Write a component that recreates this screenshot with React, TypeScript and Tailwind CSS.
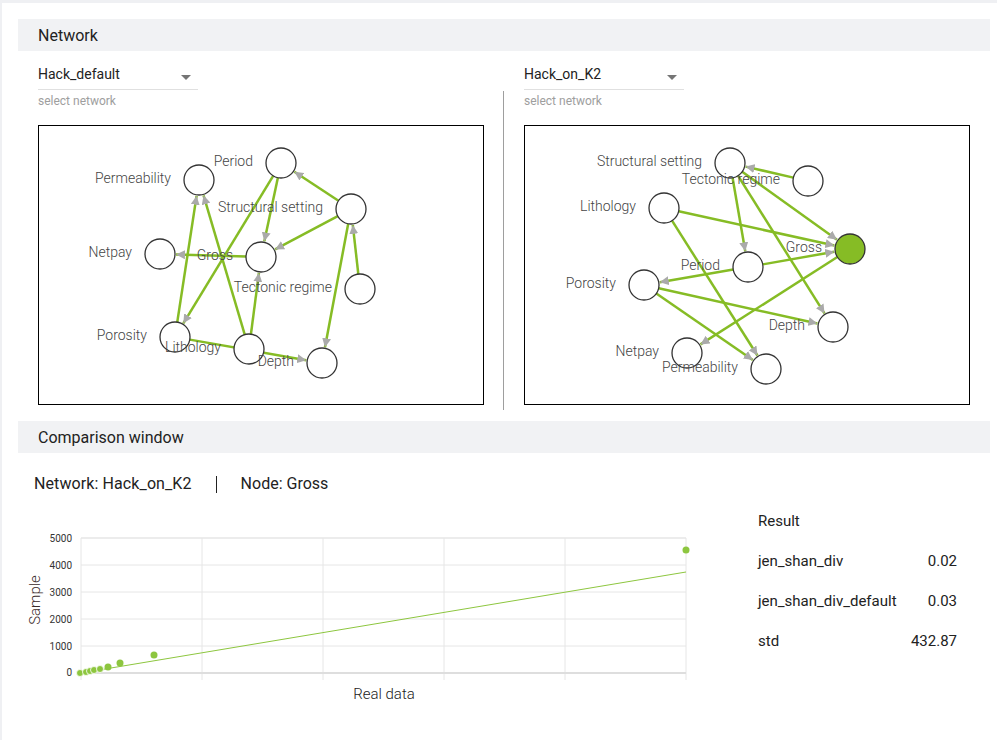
import React from 'react';

type Node = { id: string; x: number; y: number; fill?: string };
type Edge = [string, string];

const leftNodes: Node[] = [
  { id: 'Period', x: 243, y: 37 },
  { id: 'Permeability', x: 161, y: 54 },
  { id: 'Structural setting', x: 313, y: 83 },
  { id: 'Netpay', x: 122, y: 128 },
  { id: 'Gross', x: 223, y: 131 },
  { id: 'Tectonic regime', x: 322, y: 163 },
  { id: 'Porosity', x: 137, y: 211 },
  { id: 'Lithology', x: 211, y: 223 },
  { id: 'Depth', x: 284, y: 237 },
];

const leftEdges: Edge[] = [
  ['Period', 'Gross'],
  ['Period', 'Porosity'],
  ['Structural setting', 'Period'],
  ['Structural setting', 'Gross'],
  ['Structural setting', 'Depth'],
  ['Tectonic regime', 'Structural setting'],
  ['Gross', 'Netpay'],
  ['Porosity', 'Permeability'],
  ['Lithology', 'Permeability'],
  ['Lithology', 'Gross'],
  ['Porosity', 'Depth'],
];

const rightNodes: Node[] = [
  { id: 'Structural setting', x: 206, y: 37 },
  { id: 'Tectonic regime', x: 284, y: 55 },
  { id: 'Lithology', x: 140, y: 82 },
  { id: 'Gross', x: 326, y: 123, fill: '#86bc25' },
  { id: 'Period', x: 224, y: 141 },
  { id: 'Porosity', x: 120, y: 159 },
  { id: 'Depth', x: 309, y: 201 },
  { id: 'Netpay', x: 163, y: 227 },
  { id: 'Permeability', x: 242, y: 243 },
];

const rightEdges: Edge[] = [
  ['Tectonic regime', 'Structural setting'],
  ['Structural setting', 'Period'],
  ['Structural setting', 'Depth'],
  ['Structural setting', 'Gross'],
  ['Lithology', 'Gross'],
  ['Lithology', 'Permeability'],
  ['Period', 'Gross'],
  ['Period', 'Porosity'],
  ['Porosity', 'Depth'],
  ['Porosity', 'Permeability'],
  ['Gross', 'Netpay'],
];

const R = 15;

const Graph = ({ nodes, edges, mid }: { nodes: Node[]; edges: Edge[]; mid: string }) => {
  const byId = Object.fromEntries(nodes.map((n) => [n.id, n]));
  return (
    <svg width="444" height="278" viewBox="1 0 444 278" className="block">
      <defs>
        <marker id={mid} viewBox="0 0 10 10" refX="10" refY="5" markerWidth="9" markerHeight="9" markerUnits="userSpaceOnUse" orient="auto">
          <path d="M0,0 L10,5 L0,10 z" fill="#aaa" />
        </marker>
      </defs>
      {edges.map(([s, t], i) => {
        const a = byId[s];
        const b = byId[t];
        const dx = b.x - a.x;
        const dy = b.y - a.y;
        const d = Math.hypot(dx, dy);
        const ux = dx / d;
        const uy = dy / d;
        return (
          <line
            key={i}
            x1={a.x + ux * R}
            y1={a.y + uy * R}
            x2={b.x - ux * (R + 1)}
            y2={b.y - uy * (R + 1)}
            stroke="#86bc25"
            strokeWidth="2.5"
            markerEnd={`url(#${mid})`}
          />
        );
      })}
      {nodes.map((n) => (
        <g key={n.id}>
          <circle cx={n.x} cy={n.y} r={R} fill={n.fill ?? '#fff'} stroke="#333" strokeWidth="1.3" />
          <text x={n.x - 28} y={n.y - 2} textAnchor="end" dominantBaseline="central" fontSize="14" fontWeight="300" fill="#444" fontFamily="Roboto, sans-serif">
            {n.id}
          </text>
        </g>
      ))}
    </svg>
  );
};

const Select = ({ value }: { value: string }) => (
  <div className="w-[160px] pt-[15px]">
    <div className="flex items-center justify-between h-[24px] border-b border-[#e0e0e0] text-[14px] text-[#222]">
      <span className="-mt-[7px]">{value}</span>
      <span className="mr-[7px] w-0 h-0 border-l-[5px] border-r-[5px] border-t-[5px] border-l-transparent border-r-transparent border-t-[#757575]" />
    </div>
    <div className="text-[12px] text-[#9e9e9e] mt-[4px] leading-[14px]">select network</div>
  </div>
);

const Header = ({ title }: { title: string }) => (
  <div className="h-[32px] bg-[#f1f2f4] flex items-center px-5 pt-px text-[16px] text-[#222]">{title}</div>
);

const points: [number, number][] = [
  [80, 673], [86, 672], [90, 671], [94, 670], [100, 669], [108, 667], [120, 663], [154, 655], [686, 550],
];

const Chart = () => {
  // svg origin at page (20, 525)
  const ox = 20;
  const oy = 525;
  const gx = [81, 202, 323, 444, 565, 686];
  const gy = [538, 565, 592, 619, 646];
  const labels = ['5000', '4000', '3000', '2000', '1000'];
  return (
    <svg width="680" height="190" className="block" fontFamily="Roboto, sans-serif">
      {gx.map((x) => (
        <line key={x} x1={x - ox} y1={538 - oy} x2={x - ox} y2={680 - oy} stroke="#e6e6e6" strokeWidth="1" />
      ))}
      {gy.map((y, i) => (
        <g key={y}>
          <line x1={81 - ox} y1={y - oy} x2={686 - ox} y2={y - oy} stroke="#e6e6e6" strokeWidth={i === 0 ? 1.5 : 1} />
          <text x={72 - ox} y={y - oy} textAnchor="end" dominantBaseline="central" fontSize="10" fill="#333">
            {labels[i]}
          </text>
        </g>
      ))}
      <line x1={81 - ox} y1={673 - oy} x2={686 - ox} y2={673 - oy} stroke="#dedede" strokeWidth="2" />
      <text x={72 - ox} y={672 - oy} textAnchor="end" dominantBaseline="central" fontSize="10" fill="#333">0</text>
      <line x1={81 - ox} y1={673 - oy} x2={686 - ox} y2={572 - oy} stroke="#8dc63f" strokeWidth="1" />
      {points.map(([x, y], i) => (
        <circle key={i} cx={x - ox} cy={y - oy} r="3.5" fill="#8dc63f" stroke={i < 5 ? '#fff' : 'none'} strokeWidth="0.8" />
      ))}
      <text x={384 - ox} y={694 - oy} textAnchor="middle" dominantBaseline="central" fontSize="15" fontWeight="300" fill="#222">Real data</text>
      <text transform={`translate(${35 - ox} ${600 - oy}) rotate(-90)`} textAnchor="middle" dominantBaseline="central" fontSize="15" fontWeight="300" fill="#3a2a2a">Sample</text>
    </svg>
  );
};

const Row = ({ k, v }: { k: string; v: string }) => (
  <div className="flex justify-between h-[40px] items-center">
    <span>{k}</span>
    <span>{v}</span>
  </div>
);

export default function App() {
  return (
    <div className="w-[997px] h-[740px] bg-[#eff0f3] pt-[3px] pl-[2px] overflow-hidden" style={{ fontFamily: 'Roboto, sans-serif' }}>
      <div className="bg-white h-full w-[995px] pl-4 pr-[7px] pt-4">
        <Header title="Network" />
        <div className="flex px-5">
          <div className="w-[446px]">
            <Select value="Hack_default" />
            <div className="mt-[17px] w-[446px] h-[280px] border border-black">
              <Graph nodes={leftNodes} edges={leftEdges} mid="arrL" />
            </div>
          </div>
          <div className="ml-[19px] mt-[40px] w-px h-[319px] bg-[#9e9e9e]" />
          <div className="ml-[20px] w-[446px]">
            <Select value="Hack_on_K2" />
            <div className="mt-[17px] w-[446px] h-[280px] border border-black">
              <Graph nodes={rightNodes} edges={rightEdges} mid="arrR" />
            </div>
          </div>
        </div>
        <div className="mt-[11px]">
          <Header title="Comparison window" />
        </div>
        <div className="flex items-center h-[22px] mt-[20px] ml-4 text-[16px] text-[#222]">
          <span className="tracking-[0.1px]">Network: Hack_on_K2</span>
          <span className="ml-[24px] w-px h-[17px] bg-[#222]" />
          <span className="ml-[24px]">Node: Gross</span>
        </div>
        <div className="flex mt-[15px]">
          <div className="ml-[2px] mt-[15px]">
            <Chart />
          </div>
          <div className="ml-[58px] w-[199px] text-[15px] text-[#222]">
            <div className="h-[22px] flex items-center">Result</div>
            <div className="mt-[9px]">
              <Row k="jen_shan_div" v="0.02" />
              <Row k="jen_shan_div_default" v="0.03" />
              <Row k="std" v="432.87" />
            </div>
          </div>
        </div>
      </div>
    </div>
  );
}
